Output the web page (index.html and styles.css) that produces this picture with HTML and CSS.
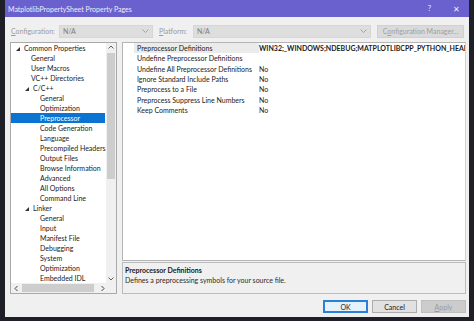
FILE: index.html
```html
<!DOCTYPE html>
<html>
<head>
<meta charset="utf-8">
<link rel="stylesheet" href="styles.css">
</head>
<body>
<div class="screen">
  <div class="window">
    <div class="titlebar">
      <span class="title">MatplotlibPropertySheet Property Pages</span>
      <span class="tb-btns"><span class="tb-help">?</span><span class="tb-close">✕</span></span>
    </div>
    <div class="body">
      <div class="config-row">
        <span class="lbl"><u>C</u>onfiguration:</span>
        <div class="combo c1"><span>N/A</span><svg class="chev" width="7" height="4" viewBox="0 0 7 4"><path d="M0.5 0.5 L3.5 3.5 L6.5 0.5" fill="none" stroke="#a5a5a5" stroke-width="1"/></svg></div>
        <span class="lbl lbl2"><u>P</u>latform:</span>
        <div class="combo c2"><span>N/A</span><svg class="chev" width="7" height="4" viewBox="0 0 7 4"><path d="M0.5 0.5 L3.5 3.5 L6.5 0.5" fill="none" stroke="#a5a5a5" stroke-width="1"/></svg></div>
        <div class="btn cm">C<u>o</u>nfiguration Manager...</div>
      </div>
      <div class="main">
        <div class="tree">
          <div class="tree-top">
            <div class="tree-list">
              <div class="row l0"><span class="tri"></span>Common Properties</div>
              <div class="row l1">General</div>
              <div class="row l1">User Macros</div>
              <div class="row l1">VC++ Directories</div>
              <div class="row l1b"><span class="tri"></span>C/C++</div>
              <div class="row l2">General</div>
              <div class="row l2">Optimization</div>
              <div class="row l2 sel">Preprocessor</div>
              <div class="row l2">Code Generation</div>
              <div class="row l2">Language</div>
              <div class="row l2">Precompiled Headers</div>
              <div class="row l2">Output Files</div>
              <div class="row l2">Browse Information</div>
              <div class="row l2">Advanced</div>
              <div class="row l2">All Options</div>
              <div class="row l2">Command Line</div>
              <div class="row l1b"><span class="tri"></span>Linker</div>
              <div class="row l2">General</div>
              <div class="row l2">Input</div>
              <div class="row l2">Manifest File</div>
              <div class="row l2">Debugging</div>
              <div class="row l2">System</div>
              <div class="row l2">Optimization</div>
              <div class="row l2">Embedded IDL</div>
            </div>
            <div class="vscroll">
              <svg class="arr" width="10" height="9" viewBox="0 0 10 9"><path d="M2.5 5.5 L5 3 L7.5 5.5" fill="none" stroke="#606060" stroke-width="1"/></svg>
              <div class="vtrack"><div class="vthumb"></div></div>
              <svg class="arr" width="10" height="9" viewBox="0 0 10 9"><path d="M2.5 3.5 L5 6 L7.5 3.5" fill="none" stroke="#606060" stroke-width="1"/></svg>
            </div>
          </div>
          <div class="hscroll-row">
            <div class="hscroll">
              <svg class="harr" width="9" height="9" viewBox="0 0 9 9"><path d="M5.5 2 L3 4.5 L5.5 7" fill="none" stroke="#404040" stroke-width="1"/></svg>
              <div class="hthumb"></div>
              <svg class="harr" width="9" height="9" viewBox="0 0 9 9"><path d="M3.5 2 L6 4.5 L3.5 7" fill="none" stroke="#404040" stroke-width="1"/></svg>
            </div>
            <div class="corner"></div>
          </div>
        </div>
        <div class="right">
          <div class="grid">
            <div class="grow first"><span class="gname">Preprocessor Definitions</span><span class="gval bold">WIN32;_WINDOWS;NDEBUG;MATPLOTLIBCPP_PYTHON_HEADER=Python.h;%(PreprocessorDefinitions)</span></div>
            <div class="grow"><span class="gname">Undefine Preprocessor Definitions</span><span class="gval"></span></div>
            <div class="grow"><span class="gname">Undefine All Preprocessor Definitions</span><span class="gval">No</span></div>
            <div class="grow"><span class="gname">Ignore Standard Include Paths</span><span class="gval">No</span></div>
            <div class="grow"><span class="gname">Preprocess to a File</span><span class="gval">No</span></div>
            <div class="grow"><span class="gname">Preprocess Suppress Line Numbers</span><span class="gval">No</span></div>
            <div class="grow"><span class="gname">Keep Comments</span><span class="gval">No</span></div>
          </div>
          <div class="desc">
            <div class="desc-title">Preprocessor Definitions</div>
            <div class="desc-text">Defines a preprocessing symbols for your source file.</div>
          </div>
        </div>
      </div>
      <div class="buttons">
        <div class="btn dlg ok">OK</div>
        <div class="btn dlg">Cancel</div>
        <div class="btn dlg disabled"><u>A</u>pply</div>
      </div>
    </div>
  </div>
</div>
</body>
</html>
```
FILE: styles.css
```css
* { box-sizing: border-box; }
html, body { margin: 0; padding: 0; }
body {
  width: 474px;
  height: 321px;
  overflow: hidden;
  background: #1f2027;
  font-family: Lato, "Noto Sans", sans-serif;
  font-size: 7px;
  color: #1a1a1a;
}
.screen {
  display: flex;
  padding-left: 5px;
  height: 321px;
}
.window {
  flex: none;
  width: 464px;
  height: 317px;
  background: #f0f0f0;
  display: flex;
  flex-direction: column;
  overflow: hidden;
}
.titlebar {
  flex: none;
  height: 17px;
  background: #6b61ce;
  color: #eeecf8;
  display: flex;
  align-items: center;
  justify-content: space-between;
  padding-left: 3px;
}
.tb-btns { display: flex; align-items: center; }
.tb-help { margin-right: 22px; font-size: 7.5px; }
.tb-close { margin-right: 9px; font-size: 8px; }
.body {
  flex: 1;
  min-width: 0;
  display: flex;
  flex-direction: column;
  padding: 0 3px 4px 5px;
}
.config-row {
  margin-top: 7px;
  height: 14px;
  display: flex;
  align-items: center;
  color: #9a9a9a;
}
.lbl { flex: none; margin-left: 1px; width: 48px; white-space: nowrap; }
.lbl2 { margin-left: 6px; width: 34px; }
u { text-decoration: underline; text-underline-offset: 1px; }
.combo {
  flex: none;
  height: 13px;
  background: #dedede;
  border: 1px solid #d6d6d6;
  display: flex;
  align-items: center;
  justify-content: space-between;
  padding: 0 3px 0 3px;
  color: #7c7c7c;
}
.c1 { width: 94px; }
.c2 { width: 178px; }
.btn {
  display: flex;
  align-items: center;
  justify-content: center;
  white-space: nowrap;
  overflow: hidden;
}
.cm {
  flex: none;
  margin-left: 6px;
  width: 87px;
  height: 13px;
  background: #dadada;
  border: 1px solid #d0d0d0;
  color: #a0a0a0;
}
.main {
  flex: none;
  margin-top: 4px;
  height: 252px;
  display: flex;
  gap: 5px;
  min-width: 0;
}
.tree {
  flex: none;
  width: 107px;
  border: 1px solid #a9a9a9;
  background: #ffffff;
  display: flex;
  flex-direction: column;
}
.tree-top { flex: 1; display: flex; min-height: 0; }
.tree-list { flex: 1; min-width: 0; overflow: hidden; }
.row {
  height: 10px;
  line-height: 10px;
  white-space: nowrap;
  overflow: hidden;
  display: flex;
  align-items: center;
}
.l0 { padding-left: 5px; }
.l1 { padding-left: 20px; }
.l1b { padding-left: 14px; }
.l2 { padding-left: 29px; }
.tri {
  flex: none;
  width: 0; height: 0;
  border-left: 4px solid transparent;
  border-bottom: 4px solid #333333;
  margin-right: 4px;
  margin-top: 1px;
}
.sel {
  background: #0b74d3;
  color: #ffffff;
  margin-right: 1px;
}
.vscroll {
  flex: none;
  width: 10px;
  background: #f0f0f0;
  display: flex;
  flex-direction: column;
  align-items: center;
}
.arr { flex: none; }
.vtrack { flex: 1; width: 100%; padding: 1px 1px; }
.vthumb { width: 8px; height: 126px; background: #cdcdcd; }
.hscroll-row { flex: none; height: 10px; display: flex; }
.hscroll {
  flex: 1;
  background: #f0f0f0;
  display: flex;
  align-items: center;
}
.harr { flex: none; margin-left: 1px; }
.hthumb { width: 72px; height: 8px; background: #cdcdcd; margin: 0 3px 0 1px; }
.corner { width: 10px; background: #f0f0f0; }
.right {
  flex: 1;
  min-width: 0;
  display: flex;
  flex-direction: column;
  gap: 1px;
}
.grid {
  flex: 1;
  min-width: 0;
  border: 1px solid #b4b4b4;
  border-right-color: #d0d0d0;
  background: #ffffff;
  padding-left: 11px;
  overflow: hidden;
}
.grow {
  height: 10.3px;
  display: flex;
  align-items: center;
  white-space: nowrap;
}
.gname { width: 125px; padding-left: 3px; flex: none; height: 100%; display: flex; align-items: center; overflow: hidden; }
.first .gname { background: #ebebeb; }
.gval { flex: none; }
.bold { font-weight: bold; }
.desc {
  flex: none;
  height: 32px;
  border: 1px solid #bcbcbc;
  background: #f0f0f0;
  padding: 2px 0 0 2px;
}
.desc-title { font-weight: bold; line-height: 10px; }
.desc-text { line-height: 10px; color: #2a2a2a; }
.buttons {
  flex: none;
  margin-top: 6px;
  display: flex;
  justify-content: flex-end;
  gap: 4px;
}
.dlg {
  flex: none;
  width: 45px;
  height: 13px;
  background: #e1e1e1;
  border: 1px solid #adadad;
}
.ok { border: 1px solid #2a80d8; box-shadow: inset 0 0 0 1px #2a80d8; background: #e5f1fb; }
.disabled { background: #cccccc; border-color: #bfbfbf; color: #9a9a9a; }
```
